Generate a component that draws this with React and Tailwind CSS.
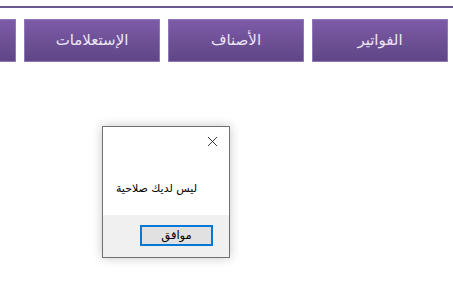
import { X } from "lucide-react";

const tabs = ["الفواتير", "الأصناف", "الإستعلامات", ""];

export default function App() {
  return (
    <div
      className="relative w-[453px] h-[305px] overflow-hidden bg-white"
      style={{ fontFamily: '"DejaVu Sans", Tahoma, sans-serif' }}
    >
      <div className="h-[6px]" />
      <div className="h-[2px] bg-[#6a5893]" />

      {/* top menu tabs */}
      <div dir="rtl" className="flex gap-[8px] pr-[5px] mt-[11px]">
        {tabs.map((t, i) => (
          <div
            key={i}
            className="shrink-0 w-[136px] h-[43px] flex items-center justify-center border border-[#8f78b8] bg-gradient-to-b from-[#7e5ba8] to-[#5f4686] text-[15px] text-[#ece6f5]"
          >
            {t}
          </div>
        ))}
      </div>

      {/* alert dialog */}
      <div
        dir="rtl"
        className="absolute left-[102px] top-[126px] w-[128px] h-[132px] flex flex-col border border-[#707070] bg-white shadow-[0_0_10px_rgba(0,0,0,0.22)]"
      >
        <div className="flex justify-start pr-[8px] pt-[6px] h-[36px]">
          <X size={17} strokeWidth={1.1} className="text-black" />
        </div>
        <div className="flex-1 pr-[32px] pt-[18px] text-[11px] text-black">
          ليس لديك صلاحية
        </div>
        <div className="h-[42px] bg-[#f0f0f0] flex justify-start pr-[16px] pt-[10px]">
          <button
            type="button"
            className="w-[73px] h-[21px] border-2 border-[#0078d7] bg-[#e1e1e1] text-[11.5px] text-black leading-none"
          >
            موافق
          </button>
        </div>
      </div>
    </div>
  );
}
